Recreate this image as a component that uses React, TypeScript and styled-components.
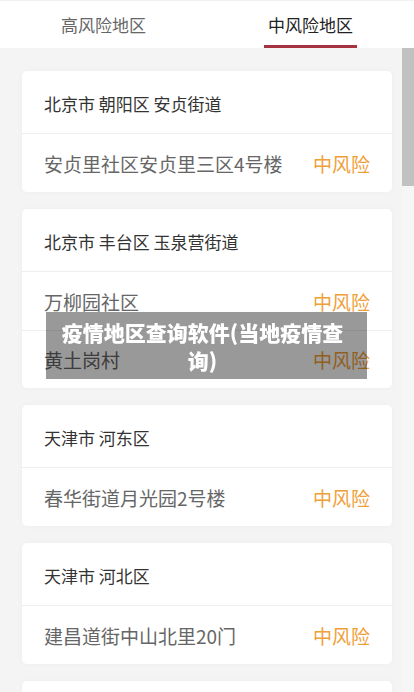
import React from "react";
import styled, { createGlobalStyle } from "styled-components";

const Global = createGlobalStyle`
  html, body { margin: 0; padding: 0; height: 100%; overflow: hidden; }
  body { font-family: "Noto Sans CJK SC", "Noto Sans", sans-serif; background: #f4f4f4; }
  * { box-sizing: border-box; }
`;

const Page = styled.div`
  display: flex;
  flex-direction: column;
  height: 692px;
`;

const TabBar = styled.div`
  display: flex;
  height: 48px;
  flex-shrink: 0;
  background: #fff;
  border-top: 1px solid #f2f2f2;
`;

const Tab = styled.div`
  flex: 1;
  display: flex;
  justify-content: center;
  align-items: stretch;
`;

const TabLabel = styled.div<{ $active?: boolean }>`
  width: 93px;
  display: flex;
  align-items: center;
  justify-content: center;
  font-size: 17px;
  color: ${(p) => (p.$active ? "#222" : "#666")};
  border-bottom: 3px solid ${(p) => (p.$active ? "#a63341" : "transparent")};
  padding-top: 2px;
`;

const Scroller = styled.div`
  position: relative;
  flex: 1;
  overflow: hidden;
  background: #f4f4f4;
`;

const ScrollTrack = styled.div`
  position: absolute;
  top: 0;
  right: 0;
  bottom: 0;
  width: 12px;
  background: #f6f6f6;
`;

const ScrollThumb = styled.div`
  height: 138px;
  background: #c1c1c1;
`;

const List = styled.div`
  display: flex;
  flex-direction: column;
  gap: 17px;
  padding: 23px 22px 43px 22px;
`;

const Card = styled.div`
  background: #fff;
  border-radius: 5px;
  box-shadow: 0 0 6px rgba(0, 0, 0, 0.03);
  overflow: hidden;
`;

const CardHead = styled.div`
  height: 63px;
  display: flex;
  align-items: center;
  padding: 2px 22px 0;
  font-size: 17px;
  color: #333;
  border-bottom: 1px solid #eeeeee;
`;

const Row = styled.div`
  height: 58px;
  display: flex;
  align-items: center;
  justify-content: space-between;
  padding: 0 22px;
  font-size: 19px;
  color: #666;
  & + & { border-top: 1px solid #eeeeee; }
`;

const Risk = styled.span`
  color: #f0a038;
`;

const Overlay = styled.div`
  position: fixed;
  left: 46px;
  top: 312px;
  width: 321px;
  height: 67px;
  background: rgba(0, 0, 0, 0.4);
  display: flex;
  align-items: center;
  justify-content: center;
  padding: 0 16px 0 8px;
  text-align: center;
  color: #fff;
  font-weight: 900;
  font-size: 21px;
  line-height: 28px;
`;

const data: { head: string; items: string[] }[] = [
  { head: "北京市 朝阳区 安贞街道", items: ["安贞里社区安贞里三区4号楼"] },
  { head: "北京市 丰台区 玉泉营街道", items: ["万柳园社区", "黄土岗村"] },
  { head: "天津市 河东区", items: ["春华街道月光园2号楼"] },
  { head: "天津市 河北区", items: ["建昌道街中山北里20门"] },
  { head: "天津市 南开区", items: ["万兴街道西湖村"] },
  { head: "天津市 津南区", items: ["双港镇新城社区"] },
  { head: "河北省 石家庄市 藁城区", items: ["增村镇小果庄村"] },
  { head: "河北省 邢台市 南宫市", items: ["凤岗街道"] },
  { head: "辽宁省 大连市 金州区", items: ["友谊街道"] },
  { head: "辽宁省 沈阳市 皇姑区", items: ["华山街道"] },
  { head: "吉林省 长春市 绿园区", items: ["城西镇"] },
  { head: "黑龙江省 绥化市 望奎县", items: ["灵山乡"] },
];

export default function App() {
  return (
    <Page>
      <Global />
      <TabBar>
        <Tab>
          <TabLabel>高风险地区</TabLabel>
        </Tab>
        <Tab>
          <TabLabel $active>中风险地区</TabLabel>
        </Tab>
      </TabBar>
      <Scroller>
        <List>
          {data.map((c) => (
            <Card key={c.head}>
              <CardHead>{c.head}</CardHead>
              {c.items.map((it) => (
                <Row key={it}>
                  <span>{it}</span>
                  <Risk>中风险</Risk>
                </Row>
              ))}
            </Card>
          ))}
        </List>
        <ScrollTrack>
          <ScrollThumb />
        </ScrollTrack>
      </Scroller>
      <Overlay>疫情地区查询软件(当地疫情查询)</Overlay>
    </Page>
  );
}
